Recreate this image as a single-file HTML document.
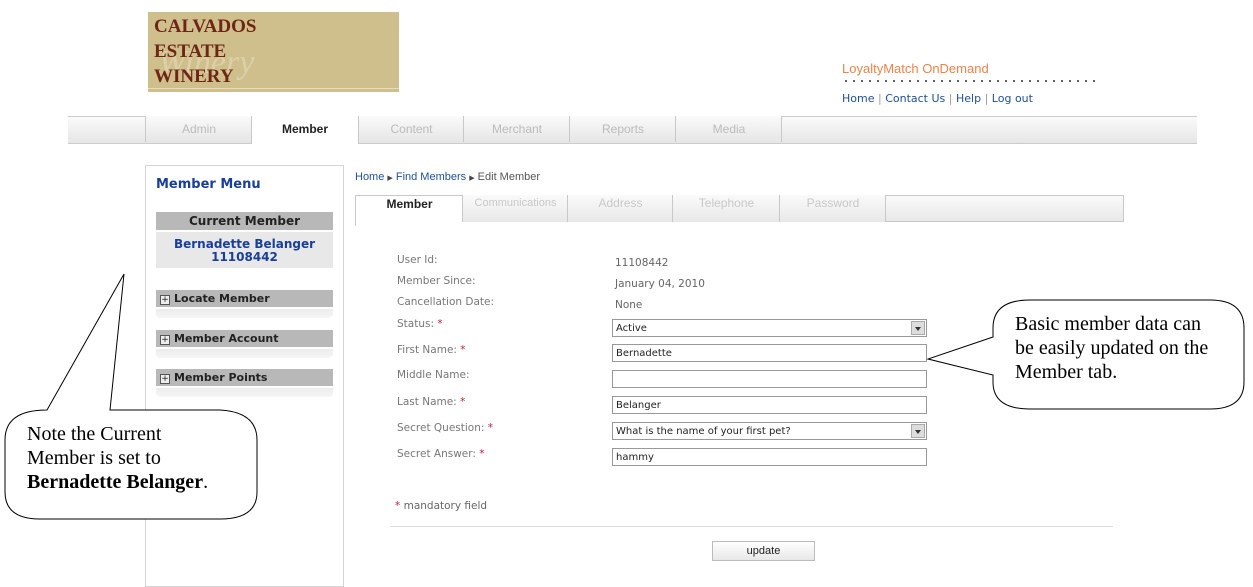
<!DOCTYPE html>
<html><head><meta charset="utf-8"><style>
body{margin:0;width:1253px;height:572px;position:relative;overflow:hidden;background:#fff;font-family:"DejaVu Sans","Liberation Sans",sans-serif}
.a{position:absolute;white-space:nowrap}
.tab{position:absolute;top:116px;height:26px;border-left:1px solid #c8c8c8;background:linear-gradient(#fafafa,#e6e6e6);font:12px "Liberation Sans",sans-serif;color:#bbb;text-align:center;line-height:26px}
.st{position:absolute;top:195px;height:27px;border-left:1px solid #c8c8c8;background:linear-gradient(#fafafa,#e8e8e8);font:12px "Liberation Sans",sans-serif;color:#c8c8c8;text-align:center;line-height:17px}
.lbl{position:absolute;left:397px;font-size:10.5px;color:#777}
.val{position:absolute;left:615px;font-size:10.5px;color:#666}
.req{color:#c0203a}
.inp{position:absolute;left:612px;width:315px;height:18px;border:1px solid #999;background:#fff;font-size:10px;color:#222;line-height:18px;box-sizing:border-box;padding-left:3px}
.dd{position:absolute;right:1px;top:1px;width:14px;height:14px;background:#ddd;border:1px solid #aaa;box-sizing:border-box}
.dd:after{content:"";position:absolute;left:3px;top:5px;border:3px solid transparent;border-top:4px solid #333}
.bar{position:absolute;left:156px;width:177px;height:17px;background:#b8b8b8;font-weight:bold;font-size:11px;color:#222;line-height:17px}
.bar b{display:inline-block;width:8px;height:8px;border:1px solid #555;margin:0 4px 0 4px;position:relative;top:0;background:#eee;font-size:9px;line-height:8px;text-align:center;font-weight:normal}
.sub{position:absolute;left:156px;width:177px;height:9px;background:linear-gradient(#ececec,#f6f6f6);border-radius:0 0 4px 4px}
</style></head><body>
<div class="a" style="left:148px;top:12px;width:251px;height:80px;background:#cfbf8d"></div>
<div class="a" style="left:148px;top:88px;width:251px;height:1px;background:#e8dcb8"></div>
<div class="a" style="left:158px;top:44px;font:italic 34px 'Liberation Serif',serif;color:#ddd0a8">Winery</div>
<div class="a" style="left:154px;top:14px;font:bold 19px/25px 'Liberation Serif',serif;color:#6e2614">CALVADOS<br>ESTATE<br>WINERY</div>

<div class="a" style="left:842px;top:61px;font:13px 'Liberation Sans',sans-serif;color:#e9844a">LoyaltyMatch OnDemand</div>
<div class="a" style="left:842px;top:80px;width:254px;height:2px;background:radial-gradient(circle,#444 0.8px,transparent 1.2px) 0 0/8px 2px repeat-x"></div>
<div class="a" style="left:842px;top:92px;font-size:11px;color:#1f4f9a">Home <span style="color:#999">|</span> Contact Us <span style="color:#999">|</span> Help <span style="color:#999">|</span> Log out</div>

<div class="a" style="left:68px;top:116px;width:1129px;height:26px;border-top:1px solid #ccc;border-bottom:1px solid #ccc;background:linear-gradient(#fafafa,#e6e6e6)"></div>
<div class="tab" style="left:145px;width:106px">Admin</div>
<div class="tab" style="left:251px;width:106px;background:#fff;color:#222;font-weight:bold;height:28px;border-right:1px solid #c8c8c8">Member</div>
<div class="tab" style="left:358px;width:105px">Content</div>
<div class="tab" style="left:463px;width:106px">Merchant</div>
<div class="tab" style="left:569px;width:106px">Reports</div>
<div class="tab" style="left:675px;width:106px">Media</div>
<div class="tab" style="left:781px;width:0"></div>

<div class="a" style="left:145px;top:165px;width:197px;height:420px;border:1px solid #d4d4d4"></div>
<div class="a" style="left:156px;top:177px;font-weight:bold;font-size:13px;color:#1a3f99">Member Menu</div>
<div class="a" style="left:156px;top:212px;width:177px;height:18px;background:#b8b8b8;text-align:center;font-weight:bold;font-size:12px;line-height:18px;color:#222">Current Member</div>
<div class="a" style="left:156px;top:232px;width:177px;height:36px;background:#e8e8e8;text-align:center;font-weight:bold;font-size:12px;line-height:13px;color:#1a3f99;padding-top:6px;box-sizing:border-box">Bernadette Belanger<br>11108442</div>
<div class="bar" style="top:290px"><b>+</b>Locate Member</div><div class="sub" style="top:309px"></div>
<div class="bar" style="top:330px"><b>+</b>Member Account</div><div class="sub" style="top:349px"></div>
<div class="bar" style="top:369px"><b>+</b>Member Points</div><div class="sub" style="top:388px"></div>

<div class="a" style="left:355px;top:171px;font:11px 'Liberation Sans',sans-serif;color:#1f4f9a">Home <span style="font-size:7px;color:#444">▶</span> Find Members <span style="font-size:7px;color:#444">▶</span> <span style="color:#555">Edit Member</span></div>
<div class="a" style="left:355px;top:195px;width:769px;height:27px;border:1px solid #c8c8c8;box-sizing:border-box;background:linear-gradient(#fafafa,#e8e8e8)"></div>
<div class="st" style="left:355px;width:107px;background:#fff;color:#222;font-weight:bold;height:30px;border-top:1px solid #c8c8c8">Member</div>
<div class="st" style="left:462px;width:105px;font-size:11px">Communications</div>
<div class="st" style="left:567px;width:105px">Address</div>
<div class="st" style="left:672px;width:107px">Telephone</div>
<div class="st" style="left:779px;width:106px">Password</div>
<div class="st" style="left:885px;width:0"></div>

<div class="lbl" style="top:254px">User Id:</div><div class="val" style="top:257px">11108442</div>
<div class="lbl" style="top:275px">Member Since:</div><div class="val" style="top:278px">January 04, 2010</div>
<div class="lbl" style="top:296px">Cancellation Date:</div><div class="val" style="top:299px">None</div>
<div class="lbl" style="top:318px">Status: <span class="req">*</span></div>
<div class="lbl" style="top:344px">First Name: <span class="req">*</span></div>
<div class="lbl" style="top:369px">Middle Name:</div>
<div class="lbl" style="top:396px">Last Name: <span class="req">*</span></div>
<div class="lbl" style="top:422px">Secret Question: <span class="req">*</span></div>
<div class="lbl" style="top:448px">Secret Answer: <span class="req">*</span></div>

<div class="inp" style="top:319px">Active<div class="dd"></div></div>
<div class="inp" style="top:344px">Bernadette</div>
<div class="inp" style="top:370px"></div>
<div class="inp" style="top:396px">Belanger</div>
<div class="inp" style="top:422px">What is the name of your first pet?<div class="dd"></div></div>
<div class="inp" style="top:448px">hammy</div>

<div class="a" style="left:395px;top:500px;font-size:10.5px;color:#666"><span class="req">*</span> mandatory field</div>
<div class="a" style="left:390px;top:526px;width:723px;height:1px;background:#ddd"></div>
<div class="a" style="left:712px;top:541px;width:103px;height:20px;border:1px solid #bbb;box-sizing:border-box;background:linear-gradient(#fff,#e8e8e8);text-align:center;font:11px/18px 'Liberation Sans',sans-serif;color:#222">update</div>

<svg class="a" style="left:0;top:0" width="1253" height="572">
<path d="M47,410 L124,274 L110,410 L220,410 Q257,412 257,440 L257,492 Q257,519 220,519 L40,519 Q5,519 5,492 L5,440 Q5,410 47,410 Z" fill="#fff" stroke="#000" stroke-width="1"/>
<path d="M993,337 L928,359 L993,375 L993,382 Q993,409 1030,409 L1210,409 Q1244,409 1244,382 L1244,328 Q1244,300 1210,300 L1030,300 Q993,300 993,328 Z" fill="#fff" stroke="#000" stroke-width="1"/>
</svg>
<div class="a" style="left:27px;top:422px;font:20px/24px 'Liberation Serif',serif;color:#000">Note the Current<br>Member is set to<br><b>Bernadette Belanger</b>.</div>
<div class="a" style="left:1015px;top:312px;font:20px/24px 'Liberation Serif',serif;color:#000">Basic member data can<br>be easily updated on the<br>Member tab.</div>
</body></html>
